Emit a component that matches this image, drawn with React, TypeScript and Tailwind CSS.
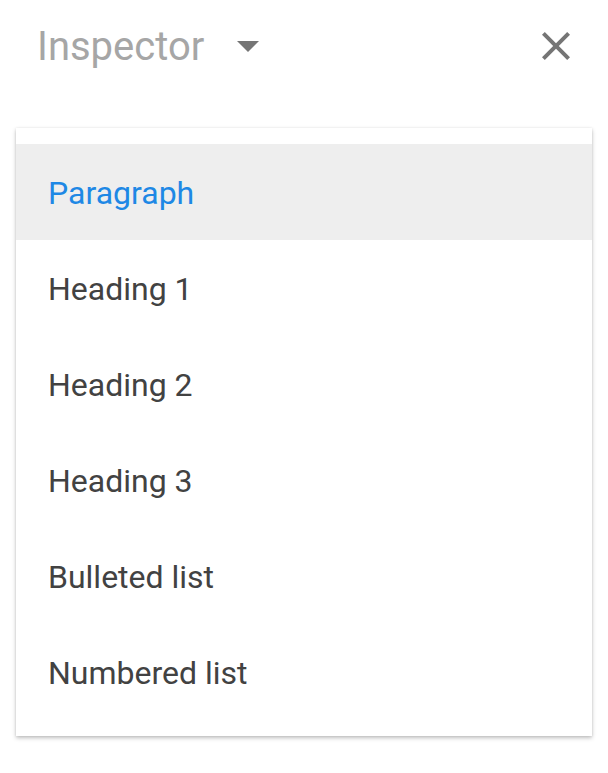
import React, { useState } from 'react';

const blockTypes = ['Paragraph', 'Heading 1', 'Heading 2', 'Heading 3', 'Bulleted list', 'Numbered list'];

const App: React.FC = () => {
  const [selected, setSelected] = useState('Paragraph');

  return (
    <div className="w-[608px] h-[773px] bg-white font-['Roboto',sans-serif]">
      {/* Header */}
      <div className="h-[92px] flex items-center pl-[37px] pr-[28px]">
        <span className="text-[40px] text-[#a6a6a6] leading-none pt-[2px]">Inspector</span>
        <svg className="ml-[33px]" width="22" height="11" viewBox="0 0 22 11">
          <path d="M0 0 L22 0 L11 11 Z" fill="#757575" />
        </svg>
        <button className="ml-auto w-[48px] h-[48px] flex items-center justify-center">
          <svg width="48" height="48" viewBox="0 0 24 24">
            <path
              d="M19 6.41L17.59 5 12 10.59 6.41 5 5 6.41 10.59 12 5 17.59 6.41 19 12 13.41 17.59 19 19 17.59 13.41 12z"
              fill="#757575"
            />
          </svg>
        </button>
      </div>

      {/* Dropdown menu */}
      <div className="mt-[36px] mx-4 w-[576px] bg-white py-4 shadow-[0_2px_4px_rgba(0,0,0,0.25),0_0_2px_rgba(0,0,0,0.08)]">
        {blockTypes.map(type => (
          <div
            key={type}
            onClick={() => setSelected(type)}
            className={`h-[96px] flex items-center pl-[32px] pt-[2px] text-[32px] cursor-pointer ${
              selected === type ? 'bg-[#eeeeee] text-[#1e88e5]' : 'text-[#424242]'
            }`}
          >
            {type}
          </div>
        ))}
      </div>
    </div>
  );
};

export default App;
